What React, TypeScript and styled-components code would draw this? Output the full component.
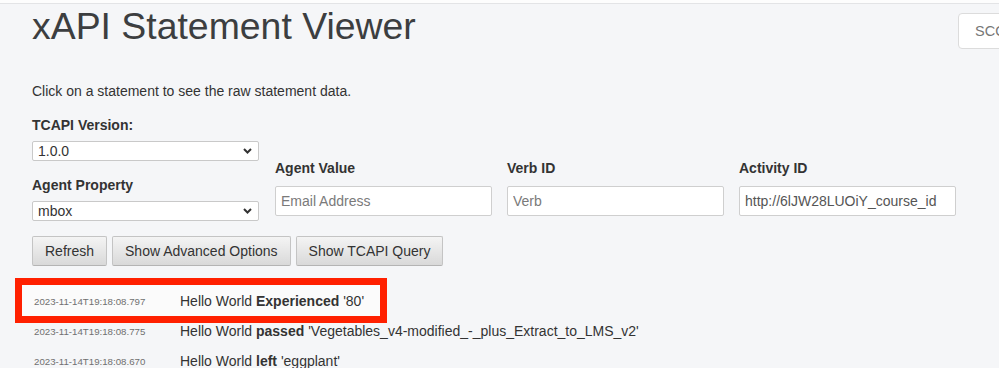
import styled, { createGlobalStyle } from 'styled-components'

const GlobalStyle = createGlobalStyle`
  html, body {
    margin: 0;
    padding: 0;
    background: #f5f6f8;
    overflow: hidden;
  }
  body {
    font-family: "Liberation Sans", Arial, sans-serif;
    color: #333;
  }
`

const TopStrip = styled.div`
  height: 3px;
  background: #fdfdfd;
  border-bottom: 1px solid #e3e4e6;
`

const Page = styled.div`
  box-sizing: border-box;
  width: 1060px;
  padding: 0 32px;
`

const Header = styled.div`
  display: flex;
  align-items: flex-start;
  justify-content: space-between;
`

const Title = styled.h1`
  margin: 2px 0 0;
  font-size: 37.4px;
  font-weight: normal;
  line-height: 40px;
  color: #3c3e40;
`

const ScoButton = styled.button`
  margin-top: 9px;
  width: 70px;
  height: 36px;
  padding: 0 0 0 16px;
  text-align: left;
  white-space: nowrap;
  overflow: hidden;
  background: #fff;
  border: 1px solid #dcdcdc;
  border-radius: 4px;
  font-family: inherit;
  font-size: 14.5px;
  color: #777;
`

const Intro = styled.p`
  margin: 34px 0 0;
  font-size: 14px;
  line-height: 16px;
  color: #333;
`

const Filters = styled.div`
  display: flex;
  align-items: flex-end;
  gap: 15px;
  margin-top: 18px;
`

const FirstColumn = styled.div`
  width: 227px;
  margin-right: 1px;
`

const Field = styled.div`
  display: flex;
  flex-direction: column;
  width: 217px;
  margin-bottom: 5px;
`

const Label = styled.label<{ $gap: number; $top?: number }>`
  display: block;
  font-size: 14px;
  font-weight: bold;
  line-height: 16px;
  color: #333;
  margin-top: ${({ $top }) => $top ?? 0}px;
  margin-bottom: ${({ $gap }) => $gap}px;
`

const SelectWrap = styled.div`
  position: relative;
  width: 227px;
  height: 20px;
`

const Select = styled.select`
  appearance: none;
  width: 100%;
  height: 20px;
  margin: 0;
  padding: 0 0 0 5px;
  background: #fff;
  border: 1px solid #c9c9c9;
  border-radius: 2px;
  font-family: inherit;
  font-size: 14px;
  color: #333;
`

const Chevron = styled.svg`
  position: absolute;
  right: 7px;
  top: 7px;
  pointer-events: none;
`

const TextInput = styled.input`
  box-sizing: border-box;
  width: 217px;
  height: 30px;
  margin: 0;
  padding: 0 5px;
  background: #fff;
  border: 1px solid #cfcfcf;
  border-radius: 2px;
  font-family: inherit;
  font-size: 14px;
  color: #555;

  &::placeholder {
    color: #7a7a7a;
  }
`

const ButtonRow = styled.div`
  display: flex;
  gap: 5px;
  margin-top: 15px;
`

const ActionButton = styled.button`
  height: 30px;
  padding: 0 12px;
  background: linear-gradient(#f4f4f4, #d9d9d9);
  border: 1px solid #c4c4c4;
  border-bottom-color: #b4b4b4;
  border-radius: 2px;
  font-family: inherit;
  font-size: 14px;
  color: #333;
`

const Statements = styled.div`
  margin-top: 20px;
`

const Row = styled.div<{ $marked?: boolean }>`
  position: relative;
  display: flex;
  align-items: center;
  height: 30px;
  padding-left: 2px;

  &::before {
    content: '';
    display: ${({ $marked }) => ($marked ? 'block' : 'none')};
    position: absolute;
    left: -17px;
    top: -8px;
    width: 358px;
    height: 31px;
    border: 7px solid #ff2000;
    background: #fbfbfb;
  }
`

const Stamp = styled.span`
  position: relative;
  width: 146px;
  font-size: 9.7px;
  color: #707070;
`

const Summary = styled.span`
  position: relative;
  font-size: 14px;
  color: #333;

  b {
    font-weight: bold;
  }
`

const statements = [
  { time: '2023-11-14T19:18:08.797', verb: 'Experienced', object: "'80'", marked: true },
  {
    time: '2023-11-14T19:18:08.775',
    verb: 'passed',
    object: "'Vegetables_v4-modified_-_plus_Extract_to_LMS_v2'",
  },
  { time: '2023-11-14T19:18:08.670', verb: 'left', object: "'eggplant'" },
]

function Arrow() {
  return (
    <Chevron width="9" height="6" viewBox="0 0 9 6">
      <path d="M1 1l3.5 3.5L8 1" fill="none" stroke="#333" strokeWidth="2" />
    </Chevron>
  )
}

export default function App() {
  return (
    <>
      <GlobalStyle />
      <TopStrip />
      <Page>
        <Header>
          <Title>xAPI Statement Viewer</Title>
          <ScoButton>SCORM</ScoButton>
        </Header>
        <Intro>Click on a statement to see the raw statement data.</Intro>
        <Filters>
          <FirstColumn>
            <Label $gap={8}>TCAPI Version:</Label>
            <SelectWrap>
              <Select defaultValue="1.0.0">
                <option>1.0.0</option>
                <option>0.95</option>
                <option>0.9</option>
              </Select>
              <Arrow />
            </SelectWrap>
            <Label $gap={8} $top={16}>
              Agent Property
            </Label>
            <SelectWrap>
              <Select defaultValue="mbox">
                <option>mbox</option>
                <option>account</option>
              </Select>
              <Arrow />
            </SelectWrap>
          </FirstColumn>
          <Field>
            <Label $gap={10}>Agent Value</Label>
            <TextInput placeholder="Email Address" />
          </Field>
          <Field>
            <Label $gap={10}>Verb ID</Label>
            <TextInput placeholder="Verb" />
          </Field>
          <Field>
            <Label $gap={10}>Activity ID</Label>
            <TextInput defaultValue="http://6lJW28LUOiY_course_id" />
          </Field>
        </Filters>
        <ButtonRow>
          <ActionButton>Refresh</ActionButton>
          <ActionButton>Show Advanced Options</ActionButton>
          <ActionButton>Show TCAPI Query</ActionButton>
        </ButtonRow>
        <Statements>
          {statements.map((s) => (
            <Row key={s.time} $marked={s.marked}>
              <Stamp>{s.time}</Stamp>
              <Summary>
                Hello World <b>{s.verb}</b> {s.object}
              </Summary>
            </Row>
          ))}
        </Statements>
      </Page>
    </>
  )
}
